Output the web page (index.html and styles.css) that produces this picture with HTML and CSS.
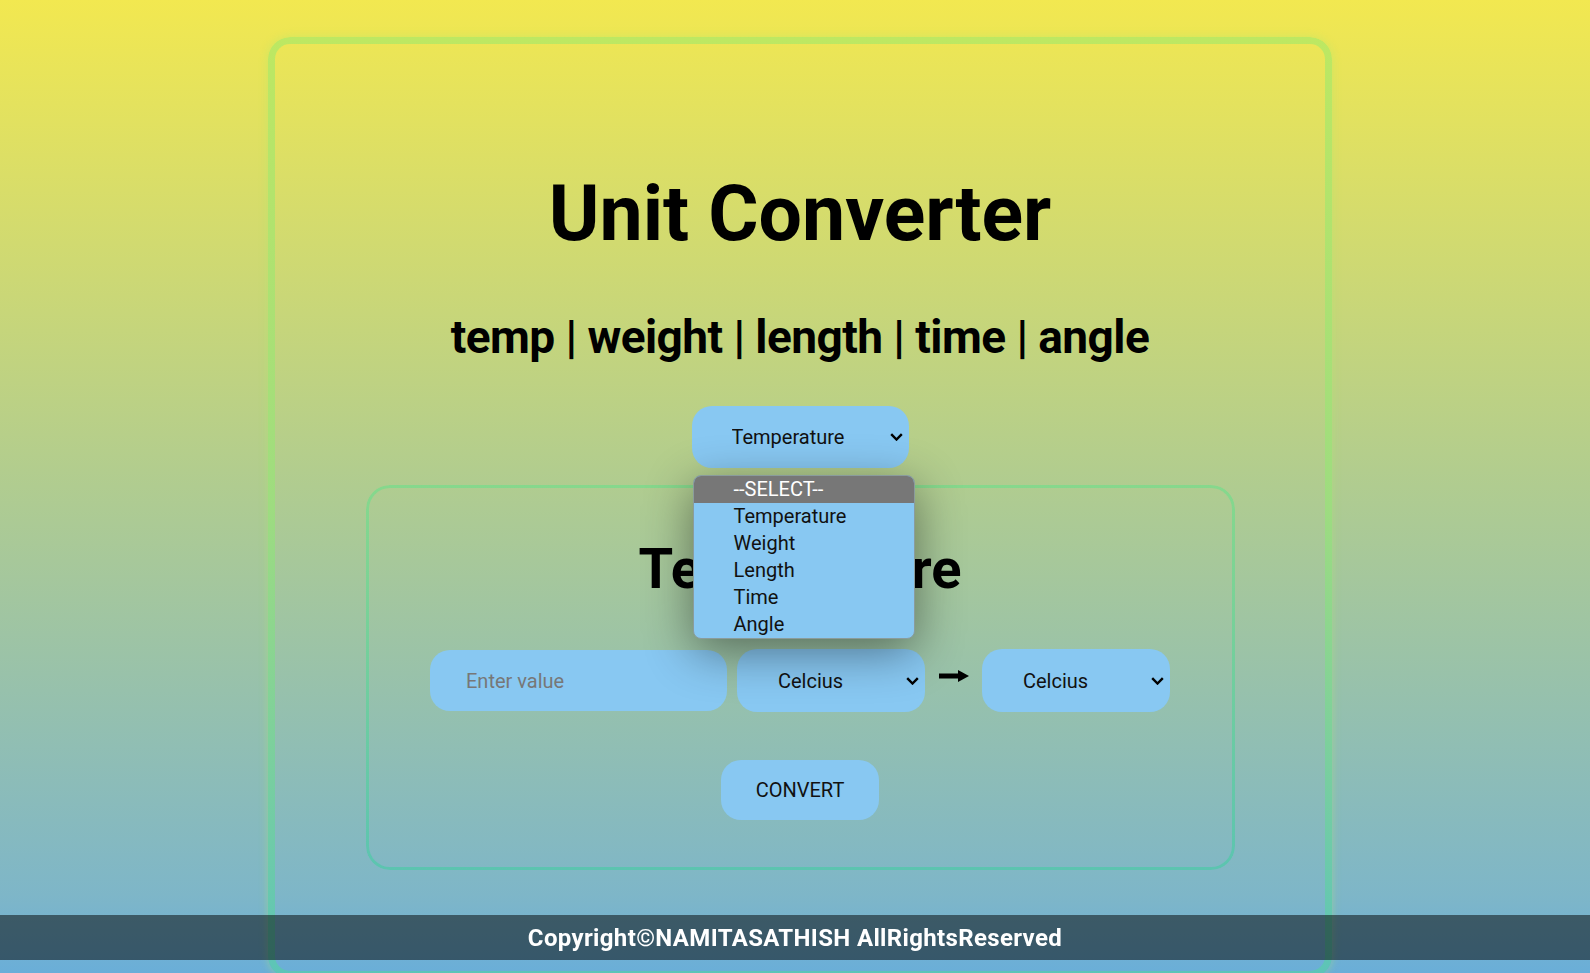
FILE: index.html
```html
<!DOCTYPE html>
<html lang="en">
<head>
<meta charset="utf-8">
<title>Unit Converter</title>
<link rel="stylesheet" href="styles.css">
</head>
<body>
<div class="page">
  <main class="card">
    <h1 class="title">Unit Converter</h1>
    <h2 class="subtitle">temp | weight | length | time | angle</h2>
    <div class="picker">
      <select class="select select-type">
        <option>Temperature</option>
      </select>
      <ul class="dropdown">
        <li class="dropdown-item is-active">--SELECT--</li>
        <li class="dropdown-item">Temperature</li>
        <li class="dropdown-item">Weight</li>
        <li class="dropdown-item">Length</li>
        <li class="dropdown-item">Time</li>
        <li class="dropdown-item">Angle</li>
      </ul>
    </div>
    <section class="panel">
      <h2 class="panel-title">Temperature</h2>
      <div class="row">
        <input class="field" type="text" placeholder="Enter value">
        <select class="select select-unit">
          <option>Celcius</option>
        </select>
        <svg class="arrow" width="30" height="12" viewBox="0 0 30 12" aria-hidden="true">
          <rect x="0" y="3.5" width="20" height="5" fill="#000"/>
          <polygon points="19,0 30,6 19,12" fill="#000"/>
        </svg>
        <select class="select select-unit">
          <option>Celcius</option>
        </select>
      </div>
      <button class="btn" type="button">CONVERT</button>
    </section>
  </main>
</div>
<footer class="footer">Copyright©NAMITASATHISH AllRightsReserved</footer>
</body>
</html>
```
FILE: styles.css
```css
html, body {
  margin: 0;
  height: 100%;
  overflow: hidden;
}

body {
  background: linear-gradient(to bottom, #f2e850 0%, #b0cc90 50%, #7eb6c8 92%, #6aaed8 100%);
  font-family: Roboto, "Liberation Sans", sans-serif;
  color: #000;
}

.page {
  display: flex;
  justify-content: center;
  padding: 37px 0 0 10px;
}

.card {
  position: relative;
  box-sizing: border-box;
  width: 1064px;
  height: 941px;
  border-radius: 22px;
  padding-top: 139px;
  display: flex;
  flex-direction: column;
  align-items: center;
  box-shadow: 0 0 8px rgba(170, 235, 110, 0.45);
}

.card::before {
  content: "";
  position: absolute;
  inset: 0;
  border-radius: 22px;
  padding: 7px;
  background: linear-gradient(to bottom, #bde862, #9edc80 50%, #5cc4b8);
  -webkit-mask: linear-gradient(#000 0 0) content-box, linear-gradient(#000 0 0);
  -webkit-mask-composite: xor;
  mask-composite: exclude;
  pointer-events: none;
}

.title {
  margin: 0;
  font-size: 77px;
  line-height: 77px;
  font-weight: 700;
}

.subtitle {
  margin: 61px 0 0;
  font-size: 46px;
  line-height: 46px;
  font-weight: 700;
  letter-spacing: -0.55px;
}

.picker {
  position: relative;
  margin-top: 46px;
  z-index: 5;
}

.select {
  -webkit-appearance: none;
  appearance: none;
  font-family: inherit;
  font-size: 20px;
  color: #111;
  background-color: #88c8f2;
  background-image: url("data:image/svg+xml,%3Csvg xmlns='http://www.w3.org/2000/svg' width='13' height='8' viewBox='0 0 13 8'%3E%3Cpath d='M1.2 1.2 L6.5 6.5 L11.8 1.2' fill='none' stroke='%23000' stroke-width='2.4'/%3E%3C/svg%3E");
  background-repeat: no-repeat;
  background-position: right 6px center;
  background-size: 13px 8px;
  border: none;
  border-radius: 20px;
  outline: none;
}

.select-type {
  width: 217px;
  height: 62px;
  padding: 0 24px 0 40px;
}

.dropdown {
  position: absolute;
  top: 69px;
  left: 1px;
  width: 222px;
  box-sizing: border-box;
  margin: 0;
  padding: 0;
  list-style: none;
  background: #88c8f2;
  border: 1px solid #8a9c9c;
  border-radius: 8px;
  overflow: hidden;
  box-shadow: 0 12px 48px rgba(0, 0, 0, 0.45);
}

.dropdown-item {
  height: 27px;
  line-height: 27px;
  padding-left: 40px;
  font-size: 20px;
  color: #111;
}

.dropdown-item.is-active {
  background: #777;
  color: #fff;
}

.panel {
  position: relative;
  box-sizing: border-box;
  width: 869px;
  height: 385px;
  margin-top: 17px;
  border-radius: 24px;
  padding-top: 56px;
  display: flex;
  flex-direction: column;
  align-items: center;
}

.panel::before {
  content: "";
  position: absolute;
  inset: 0;
  border-radius: 24px;
  padding: 3px;
  background: linear-gradient(to bottom, #86d88c, #5cc4b0);
  -webkit-mask: linear-gradient(#000 0 0) content-box, linear-gradient(#000 0 0);
  -webkit-mask-composite: xor;
  mask-composite: exclude;
  pointer-events: none;
}

.panel-title {
  margin: 0;
  font-size: 56px;
  line-height: 56px;
  font-weight: 700;
}

.row {
  display: flex;
  align-items: center;
  gap: 10px;
  margin-top: 52px;
  height: 63px;
}

.field {
  box-sizing: border-box;
  width: 297px;
  height: 61px;
  padding: 0 0 0 36px;
  font-family: inherit;
  font-size: 20px;
  color: #111;
  background: #88c8f2;
  border: none;
  border-radius: 20px;
  outline: none;
}

.field::placeholder {
  color: #777;
}

.select-unit {
  width: 188px;
  height: 63px;
  padding: 0 24px 0 41px;
}

.arrow {
  margin: 0 3px 10px 4px;
}

.btn {
  margin-top: 48px;
  width: 158px;
  height: 60px;
  font-family: inherit;
  font-size: 20px;
  color: #111;
  background: #88c8f2;
  border: none;
  border-radius: 20px;
}

.footer {
  position: fixed;
  left: 0;
  right: 0;
  bottom: 13px;
  height: 45px;
  line-height: 47px;
  background: rgba(0, 0, 0, 0.5);
  color: #fff;
  text-align: center;
  font-size: 24px;
  font-weight: 700;
  letter-spacing: 0.35px;
}
```
